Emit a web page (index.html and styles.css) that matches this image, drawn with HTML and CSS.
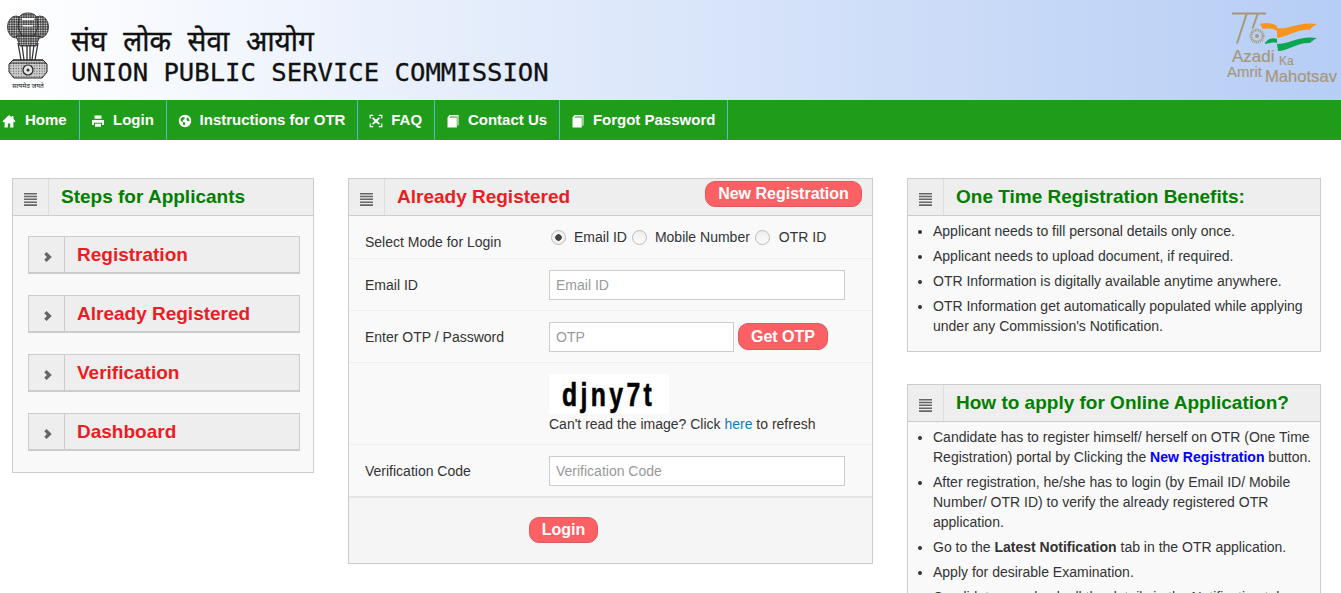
FILE: index.html
```html
<!DOCTYPE html>
<html lang="en">
<head>
<meta charset="utf-8">
<title>Union Public Service Commission</title>
<link rel="stylesheet" href="styles.css">
</head>
<body>
<svg class="defs" width="0" height="0" aria-hidden="true">
  <defs>
    <pattern id="stip" width="2.400" height="2.400" patternUnits="userSpaceOnUse"><rect width="2.400" height="2.400" fill="#333"/><circle cx="1.200" cy="1.200" r=".85" fill="#eee"/></pattern>
    <pattern id="stip2" width="2.600" height="2.600" patternUnits="userSpaceOnUse"><rect width="2.600" height="2.600" fill="#cfcfcf"/><circle cx="1.300" cy="1.300" r=".65" fill="#555"/></pattern>
  </defs>
  <symbol id="i-menu" viewBox="0 0 13 13"><path d="M0 0h13v1.500H0zM0 2.800h13v1.500H0zM0 5.600h13v1.500H0zM0 8.400h13v1.500H0zM0 11.200h13v1.800H0z"/></symbol>
  <symbol id="i-chev" viewBox="0 0 9 12"><path d="M2.800 0 9 6l-6.200 6L0 9.200 3.200 6 0 2.800z"/></symbol>
  <symbol id="i-home" viewBox="0 0 14 14"><path d="M7 1 .5 7.300l1 1L2.600 7.400V13.500h3.200V9.400h2.400v4.100h3.200V7.400l1.100.9 1-1L11.500 4.900V2H9.700v1.200z"/></symbol>
  <symbol id="i-print" viewBox="0 0 14 14"><path d="M3.500 1.500h7v3.300h-7zM1 6h12v5h-2V8.800H3V11H1zM4 9.800h6v3H4z"/></symbol>
  <symbol id="i-globe" viewBox="0 0 14 14"><path fill-rule="evenodd" d="M7 .8a6.200 6.200 0 1 0 0 12.400A6.200 6.200 0 0 0 7 .8zM2.600 5l2-2 2.200.4-.6 2-1.700.5.900 2.300 1.800.4-.5 3-1.400-.6-.5-3.100L2.800 7zM9 3.200l2 1.500.5 2.300-1.700.2L8.500 5.500z"/></symbol>
  <symbol id="i-full" viewBox="0 0 14 14"><path d="M.6.800h3.600V2H1.800v2.400H.6zM9.800.800h3.600v3.600h-1.200V2H9.800zM.6 9.600h1.200V12h2.400v1.200H.6zM12.200 9.600h1.200v3.600H9.800V12h2.400zM4 3.200 7 5.600l3-2.400 1 1L8.600 7 11 9.800l-1 1L7 8.400l-3 2.400-1-1L5.400 7 3 4.200z"/></symbol>
  <symbol id="i-book" viewBox="0 0 14 14"><path d="M1.500 3.500 3.500 1h9v10.500h-1V2.500H4.300L3 3.500h7.800v10H1.500z"/></symbol>
</svg>

<header class="masthead">
  <svg class="emblem" viewBox="0 0 42 84" role="img" aria-label="State Emblem of India">
    <ellipse cx="9" cy="17" rx="8.500" ry="11" fill="url(#stip)" stroke="#222" stroke-width=".8"/>
    <ellipse cx="33" cy="17" rx="8.500" ry="11" fill="url(#stip)" stroke="#222" stroke-width=".8"/>
    <path d="M21 3c-5 0-8 2-9 5l-1 9 4 9h12l4-9-1-9c-1-3-4-5-9-5z" fill="url(#stip)" stroke="#222" stroke-width=".8"/>
    <path d="M15 8h12v2H15zM16 15h10v1.500H16z" fill="#f4f6fb"/>
    <path d="M9 26h24l-4 10H13z" fill="url(#stip)" stroke="#222" stroke-width=".8"/>
    <g stroke="#333" stroke-width="1.300" fill="none">
      <path d="M11 33l3 17M15 35l2 15M20 35v15M23 35v15M27 35l-2 15M31 33l-3 17"/>
    </g>
    <path d="M6 50h30l4 4v8l-5 6H7l-5-6v-8z" fill="url(#stip2)" stroke="#222" stroke-width="1"/>
    <path d="M6 50h30M3 53h36" stroke="#222" stroke-width=".9"/>
    <circle cx="21" cy="60" r="5" fill="#e4e4e4" stroke="#222" stroke-width="1.200"/>
    <circle cx="21" cy="60" r="1.500" fill="#333"/>
    <text class="motto" x="21" y="78" text-anchor="middle">सत्यमेव जयते</text>
  </svg>
  <div class="brand">
    <div class="brand-hi">संघ लोक सेवा आयोग</div>
    <div class="brand-en">UNION PUBLIC SERVICE COMMISSION</div>
  </div>
  <svg class="azadi" viewBox="0 0 141 100" role="img" aria-label="75 Azadi Ka Amrit Mahotsav">
    <path d="M32 12.500h34v2H47.500L38 43.500h-2l9.400-29H32zM56.500 14.500h2l-5 14h-2z" fill="#a8977a"/>
    <path d="M60 24C66 22 72 23 77 26V31C72 28 67 28 63 29zM77 28C88 30 100 21 117 24 113 26 111 28 110 30 98 28 88 37 77 38z" fill="#f7941d"/>
    <path d="M65 43C68 39 73 37 77 39V43C73 42 69 43 65 44zM77 44C90 44 100 35 117 38 113 40 111 42 110 43 98 42 88 51 78 51z" fill="#0aa64f"/>
    <circle cx="57" cy="36" r="6" fill="none" stroke="#a8977a" stroke-width="3" stroke-dasharray="1 .8"/>
    <circle cx="57" cy="36" r="2" fill="#a8977a"/>
    <text class="az az-1" x="32" y="62">Azadi</text>
    <text class="az az-2" x="79" y="65">Ka</text>
    <text class="az az-3" x="27" y="77">Amrit</text>
    <text class="az az-4" x="65" y="82">Mahotsav</text>
  </svg>
</header>

<nav class="topnav">
  <a class="nav-item nav-first" href="#"><svg class="nav-ico"><use href="#i-home"/></svg>Home</a>
  <a class="nav-item" href="#"><svg class="nav-ico"><use href="#i-print"/></svg>Login</a>
  <a class="nav-item" href="#"><svg class="nav-ico"><use href="#i-globe"/></svg>Instructions for OTR</a>
  <a class="nav-item" href="#"><svg class="nav-ico"><use href="#i-full"/></svg>FAQ</a>
  <a class="nav-item" href="#"><svg class="nav-ico"><use href="#i-book"/></svg>Contact Us</a>
  <a class="nav-item" href="#"><svg class="nav-ico"><use href="#i-book"/></svg>Forgot Password</a>
</nav>

<main class="columns">
  <section class="panel">
    <div class="panel-head">
      <span class="head-ico"><svg class="menu-ico"><use href="#i-menu"/></svg></span>
      <h2 class="head-title green">Steps for Applicants</h2>
    </div>
    <div class="steps">
      <div class="step"><span class="step-ico"><svg class="chev-ico"><use href="#i-chev"/></svg></span><span class="step-title">Registration</span></div>
      <div class="step"><span class="step-ico"><svg class="chev-ico"><use href="#i-chev"/></svg></span><span class="step-title">Already Registered</span></div>
      <div class="step"><span class="step-ico"><svg class="chev-ico"><use href="#i-chev"/></svg></span><span class="step-title">Verification</span></div>
      <div class="step"><span class="step-ico"><svg class="chev-ico"><use href="#i-chev"/></svg></span><span class="step-title">Dashboard</span></div>
    </div>
  </section>

  <section class="panel">
    <div class="panel-head">
      <span class="head-ico"><svg class="menu-ico"><use href="#i-menu"/></svg></span>
      <h2 class="head-title red">Already Registered</h2>
      <button class="btn btn-new" type="button">New Registration</button>
    </div>
    <form class="login-form">
      <div class="row row-mode">
        <span class="label label-mode">Select Mode for Login</span>
        <div class="radios">
          <label class="radio"><input type="radio" name="mode" checked>Email ID</label>
          <label class="radio"><input type="radio" name="mode">Mobile Number</label>
          <label class="radio radio-last"><input type="radio" name="mode">OTR ID</label>
        </div>
      </div>
      <div class="row">
        <span class="label">Email ID</span>
        <input class="field" type="text" placeholder="Email ID">
      </div>
      <div class="row">
        <span class="label">Enter OTP / Password</span>
        <input class="field field-otp" type="text" placeholder="OTP">
        <button class="btn btn-otp" type="button">Get OTP</button>
      </div>
      <div class="row row-captcha">
        <div class="captcha-box">
          <div class="captcha"><span class="captcha-text">djny7t</span></div>
          <div class="captcha-note">Can't read the image? Click <a href="#">here</a> to refresh</div>
        </div>
      </div>
      <div class="row row-last">
        <span class="label">Verification Code</span>
        <input class="field" type="text" placeholder="Verification Code">
      </div>
      <div class="form-foot">
        <button class="btn btn-login" type="button">Login</button>
      </div>
    </form>
  </section>

  <div class="side">
    <section class="panel">
      <div class="panel-head">
        <span class="head-ico"><svg class="menu-ico"><use href="#i-menu"/></svg></span>
        <h2 class="head-title green">One Time Registration Benefits:</h2>
      </div>
      <ul class="info info-short">
        <li>Applicant needs to fill personal details only once.</li>
        <li>Applicant needs to upload document, if required.</li>
        <li>OTR Information is digitally available anytime anywhere.</li>
        <li>OTR Information get automatically populated while applying under any Commission's Notification.</li>
      </ul>
    </section>
    <section class="panel">
      <div class="panel-head">
        <span class="head-ico"><svg class="menu-ico"><use href="#i-menu"/></svg></span>
        <h2 class="head-title green">How to apply for Online Application?</h2>
      </div>
      <ul class="info">
        <li>Candidate has to register himself/ herself on OTR (One Time Registration) portal by Clicking the <b class="blue">New Registration</b> button.</li>
        <li>After registration, he/she has to login (by Email ID/ Mobile Number/ OTR ID) to verify the already registered OTR application.</li>
        <li>Go to the <b>Latest Notification</b> tab in the OTR application.</li>
        <li>Apply for desirable Examination.</li>
        <li>Candidate can check all the details in the Notification tab.</li>
      </ul>
    </section>
  </div>
</main>
</body>
</html>
```
FILE: styles.css
```css
* { box-sizing: border-box; }
html, body { margin: 0; height: 100%; overflow: hidden; }
body { font-family: "Liberation Sans", Arial, sans-serif; font-size: 14px; line-height: 20px; color: #333; background: #fff; }
.defs { position: absolute; }

.masthead { height: 100px; display: flex; background: linear-gradient(to right, #fff 0%, #b6cdf5 100%); }
.emblem { width: 42px; height: 84px; margin: 10px 0 0 7px; flex: none; }
.motto { font-family: "Noto Sans", "DejaVu Sans", sans-serif; font-size: 6.500px; fill: #222; }
.brand { margin-left: 22px; padding-top: 21px; color: #111; }
.brand-hi { font-family: "Noto Sans", "DejaVu Sans", sans-serif; font-size: 28px; line-height: 38px; word-spacing: 9.400px; -webkit-text-stroke: .4px #111; }
.brand-en { font-family: "DejaVu Sans Mono", monospace; font-size: 25.600px; line-height: 26px; -webkit-text-stroke: .3px #111; }
.azadi { width: 141px; height: 100px; margin-left: auto; flex: none; }
.az { font-family: "Liberation Sans", sans-serif; fill: #a8977a; stroke: #a8977a; stroke-width: .2px; }
.az-1 { font-size: 17px; }
.az-2 { font-size: 12px; }
.az-3 { font-size: 15px; }
.az-4 { font-size: 16.600px; }

.topnav { height: 40px; display: flex; background: #1f9c1a; }
.nav-item { display: flex; align-items: center; padding: 0 11.800px 0 11px; border-right: 1px solid #4fbcd0; color: #fff; font-size: 15px; font-weight: bold; text-decoration: none; }
.nav-first { padding: 0 12.300px 0 3px; }
.nav-ico { width: 14px; height: 14px; margin-right: 8px; margin-left: -1px; fill: #fff; position: relative; top: 1px; }
.nav-item .nav-ico { margin-left: 0; }
.nav-first .nav-ico { margin-left: -1px; margin-right: 9px; }

.columns { display: grid; grid-template-columns: 302px 525px 414px; column-gap: 34px; align-items: start; padding: 38px 0 0 12px; }
.side { display: flex; flex-direction: column; row-gap: 32px; }
.panel { border: 1px solid #ccc; background: #f9f9f9; }
.panel-head { height: 37px; display: flex; align-items: center; background: #eee; border-bottom: 1px solid #ccc; }
.head-ico { width: 36px; height: 36px; display: flex; align-items: center; justify-content: center; border-right: 1px solid #ddd; flex: none; }
.menu-ico { width: 13px; height: 13px; fill: #666; position: relative; top: 2px; }
.head-title { margin: 0 0 0 12px; font-size: 19px; line-height: 36px; font-weight: bold; }
.green { color: #007f00; }
.red { color: #ed1c24; }

.steps { padding: 20px 13px 21px 15px; display: flex; flex-direction: column; row-gap: 21px; }
.step { height: 38px; display: flex; align-items: center; background: #eee; border: 1px solid #ccc; border-bottom-width: 2px; }
.step-ico { width: 36px; height: 35px; display: flex; align-items: center; justify-content: center; border-right: 1px solid #ccc; flex: none; }
.chev-ico { width: 8px; height: 10px; fill: #666; position: relative; top: 2px; left: 1px; }
.step-title { margin-left: 12px; font-size: 19px; font-weight: bold; color: #ed1c24; }

.btn { border: 1px solid #e0585c; border-radius: 10px; background: #fb6064; color: #fff; font-family: inherit; font-size: 16px; font-weight: bold; padding: 0; }
.btn-new { width: 157px; height: 26px; margin: -7px 10px 0 auto; }
.btn-otp { width: 90px; height: 27px; margin-left: 4px; }
.btn-login { width: 69px; height: 26px; }

.row { min-height: 52px; display: flex; align-items: center; padding: 0 0 0 16px; border-bottom: 1px solid #eee; }
.row-mode { height: 43px; min-height: 43px; padding-top: 2px; }
.row-last { border-bottom: 2px solid #e6e6e6; height: 53px; }
.label { width: 184px; flex: none; }
.label-mode { position: relative; top: 4px; }
.radios { display: flex; margin-left: 2px; position: relative; top: -1px; }
.radio { display: flex; align-items: center; }
.radio input { appearance: none; width: 15px; height: 15px; margin: 0 8px 0 5px; border: 1px solid #bbb; border-radius: 50%; background: linear-gradient(#eee, #fbfbfb); }
.radio:first-child input { margin-left: 0; }
.radio-last input { margin-right: 9px; }
.radio input:checked { background: radial-gradient(circle, #444 0 3px, #f2f2f2 3.500px); }
.field { width: 296px; height: 30px; padding: 0 6px; border: 1px solid #ccc; background: #fff; font-family: inherit; font-size: 14px; color: #333; }
.field::placeholder { color: #999; opacity: 1; }
.field-otp { width: 185px; }
.row-captcha { height: 82px; padding-left: 200px; align-items: flex-start; padding-top: 11px; }
.captcha { width: 120px; height: 40px; background: #fff; color: #000; font-weight: bold; font-size: 33px; line-height: 42px; padding-left: 13px; overflow: hidden; }
.captcha-text { display: inline-block; letter-spacing: 4.500px; -webkit-text-stroke: .6px #000; transform: scaleX(.75); transform-origin: left center; }
.captcha-note a { color: #0b7ec2; text-decoration: none; }
.form-foot { height: 65px; padding: 19px 0 0 180px; background: #f5f5f5; }

.info { margin: 0; padding: 5px 5px 16px 25px; }
.info-short { padding-bottom: 10px; }
.info li { margin-bottom: 5px; }
.blue { color: #00f; }
```
